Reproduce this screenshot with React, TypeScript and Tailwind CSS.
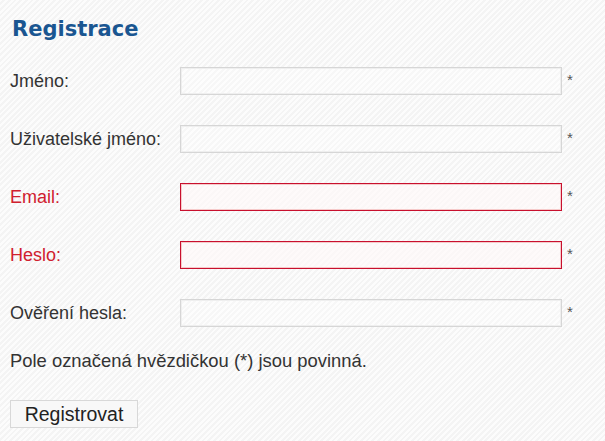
import React from "react";

type Field = {
  label: string;
  type: string;
  error?: boolean;
};

const fields: Field[] = [
  { label: "Jméno:", type: "text" },
  { label: "Uživatelské jméno:", type: "text" },
  { label: "Email:", type: "email", error: true },
  { label: "Heslo:", type: "password", error: true },
  { label: "Ověření hesla:", type: "password" },
];

const App = () => {
  return (
    <div className="min-h-[441px] w-full bg-[repeating-linear-gradient(135deg,#fcfcfc_0px,#fcfcfc_2px,#f4f4f4_2px,#f4f4f4_4px)] pl-[10px] font-['Liberation_Sans',Arial,sans-serif] text-[#333]">
      <h1 className="pl-[2px] pt-[14px] font-['DejaVu_Sans',Verdana,sans-serif] text-[21px] font-bold leading-[30px] text-[#1a5691]">
        Registrace
      </h1>

      {/* form rows */}
      <form className="mt-[23px]" onSubmit={(e) => e.preventDefault()}>
        <div className="grid grid-cols-[170px_382px_auto] items-center gap-y-[30px]">
          {fields.map((f) => (
            <React.Fragment key={f.label}>
              <label
                className={`text-[18px] leading-[22px] ${
                  f.error ? "text-[#d0202f]" : "text-[#333]"
                }`}
              >
                {f.label}
              </label>
              <input
                type={f.type}
                className={`h-[28px] w-full border outline-none ${
                  f.error
                    ? "border-[#c8102e] bg-[#fff8f8]/60 shadow-[inset_0_0_0_1px_#f6caca]"
                    : "border-[#d6d6d6] bg-white/30 shadow-[inset_0_0_0_1px_#efefef]"
                }`}
              />
              <span className="-mt-[2px] pl-[5px] text-[15px] leading-[16px] text-[#555]">*</span>
            </React.Fragment>
          ))}
        </div>

        <p className="mt-[23px] text-[18.4px] leading-[22px] text-[#333]">
          Pole označená hvězdičkou (*) jsou povinná.
        </p>

        <button
          type="submit"
          className="mt-[28px] h-[28px] w-[128px] border border-[#d8d8d8] bg-[#f8f8f8] text-[19.5px] leading-[26px] text-[#222]"
        >
          Registrovat
        </button>
      </form>
    </div>
  );
};

export default App;
